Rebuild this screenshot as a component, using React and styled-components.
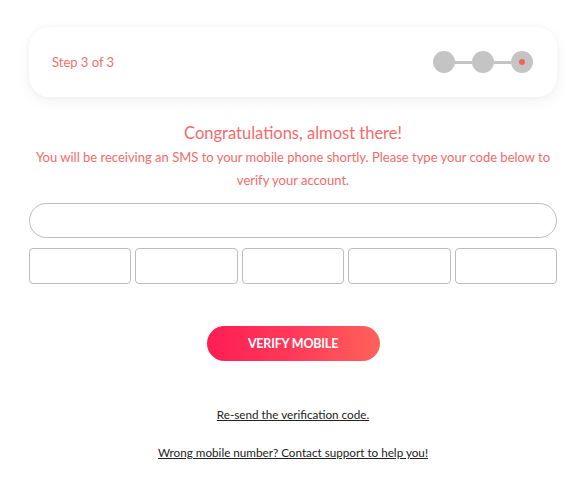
import React, { useState } from "react";
import styled, { createGlobalStyle } from "styled-components";

const Global = createGlobalStyle`
  body {
    margin: 0;
    background: #fff;
    font-family: Lato, "Open Sans", sans-serif;
  }
`;

const Page = styled.div`
  padding: 27px 21px 0 29px;
  display: flex;
  flex-direction: column;
`;

const Card = styled.div`
  height: 70px;
  border-radius: 20px;
  background: #fff;
  box-shadow: 0 4px 14px rgba(0, 0, 0, 0.06), 0 0 4px rgba(0, 0, 0, 0.03);
  display: flex;
  align-items: center;
  justify-content: space-between;
  padding: 0 24px 0 23px;
`;

const StepLabel = styled.span`
  color: #f0706c;
  font-size: 13px;
`;

const Steps = styled.div`
  display: flex;
  align-items: center;
`;

const Dot = styled.div`
  width: 22px;
  height: 22px;
  border-radius: 50%;
  background: #c4c4c4;
  display: flex;
  align-items: center;
  justify-content: center;
  &::after {
    content: "";
    width: 6px;
    height: 6px;
    border-radius: 50%;
    background: ${(p) => (p.active ? "#f5605a" : "transparent")};
  }
`;

const Line = styled.div`
  width: 17px;
  height: 3px;
  background: #c4c4c4;
`;

const Title = styled.h2`
  margin: 26px 0 0;
  text-align: center;
  font-weight: 400;
  font-size: 16.5px;
  line-height: 20px;
  color: #f26b6b;
`;

const Text = styled.p`
  margin: 3px 0 0;
  text-align: center;
  font-size: 13px;
  line-height: 23px;
  color: #f26b6b;
`;

const PhoneInput = styled.input`
  margin-top: 11px;
  height: 35px;
  box-sizing: border-box;
  border: 1px solid #bdbdbd;
  border-radius: 18px;
  outline: none;
  padding: 0 16px;
  font-family: inherit;
`;

const CodeRow = styled.div`
  margin-top: 10px;
  display: grid;
  grid-template-columns: repeat(5, 1fr);
  gap: 4px;
`;

const CodeBox = styled.input`
  height: 36px;
  min-width: 0;
  box-sizing: border-box;
  border: 1px solid #bdbdbd;
  border-radius: 4px;
  outline: none;
  text-align: center;
  font-family: inherit;
`;

const Button = styled.button`
  align-self: center;
  margin-top: 42px;
  width: 173px;
  height: 35px;
  border: none;
  border-radius: 18px;
  background: linear-gradient(90deg, #ff1d52 0%, #ff3a5a 50%, #ff625a 100%);
  color: #fff;
  font-family: inherit;
  font-weight: 700;
  font-size: 12.5px;
  letter-spacing: -0.2px;
  cursor: pointer;
`;

const Link = styled.a`
  align-self: center;
  margin-top: ${(p) => p.gap}px;
  color: #222;
  font-size: 11.7px;
  line-height: 14px;
  text-decoration: underline;
  cursor: pointer;
`;

export default function App() {
  const [code, setCode] = useState(["", "", "", "", ""]);

  return (
    <Page>
      <Global />
      <Card>
        <StepLabel>Step 3 of 3</StepLabel>
        <Steps>
          <Dot />
          <Line />
          <Dot />
          <Line />
          <Dot active />
        </Steps>
      </Card>
      <Title>Congratulations, almost there!</Title>
      <Text>
        You will be receiving an SMS to your mobile phone shortly. Please type
        your code below to verify your account.
      </Text>
      <PhoneInput />
      <CodeRow>
        {code.map((c, idx) => (
          <CodeBox
            key={idx}
            value={c}
            maxLength={1}
            onChange={(e) => {
              const next = [...code];
              next[idx] = e.target.value;
              setCode(next);
            }}
          />
        ))}
      </CodeRow>
      <Button>VERIFY MOBILE</Button>
      <Link gap={46}>Re-send the verification code.</Link>
      <Link gap={24}>Wrong mobile number? Contact support to help you!</Link>
    </Page>
  );
}
